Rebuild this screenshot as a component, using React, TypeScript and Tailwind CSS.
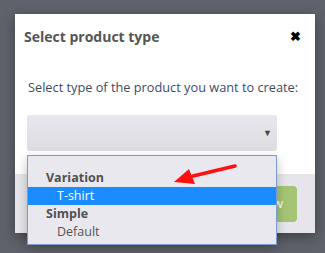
const options = [
  { label: 'Variation', group: true },
  { label: 'T-shirt', selected: true },
  { label: 'Simple', group: true },
  { label: 'Default' },
];

export default function App() {
  return (
    <div
      className="w-[325px] h-[253px] bg-[#5f626a] pt-[14px] pl-[15px] overflow-hidden"
      style={{ fontFamily: '"Open Sans", sans-serif' }}
    >
      <div className="w-[300px] h-[219px] bg-white flex flex-col shadow-[0_4px_12px_rgba(0,0,0,0.35)]">
        <div className="flex items-center justify-between h-[42px] pl-[9px] pr-[14px] pt-[2px]">
          <h3 className="text-[14px] font-bold text-[#555555]">Select product type</h3>
          <span className="text-[13px] font-bold text-black leading-none">✖</span>
        </div>

        <div className="relative flex-1 px-[12px] pt-[21px]">
          <p className="text-[12.75px] text-[#3e4a66] leading-[20px] whitespace-nowrap pl-[1px]">
            Select type of the product you want to create:
          </p>
          <div className="mt-[18px] w-[250px] h-[36px] rounded-[3px] bg-gradient-to-b from-[#e8e7ed] to-[#dddce2] flex items-center justify-end pr-[5px]">
            <span className="text-[9px] text-[#444]">▼</span>
          </div>

          <div className="absolute left-[12px] top-[99px] w-[250px] h-[90px] z-10 bg-[#e9e8ee] border border-[#7c9bd0] pt-[13px] shadow-[0_4px_10px_rgba(0,0,0,0.25)]">
            {options.map((o) => (
              <div
                key={o.label}
                className={`h-[18px] flex items-center text-[12.5px] leading-none ${
                  o.group ? 'pl-[18px] font-bold text-[#505050]' : 'pl-[29px]'
                } ${o.selected ? 'bg-[#1a8cff] text-white' : o.group ? '' : 'text-[#555555]'}`}
              >
                {o.label}
              </div>
            ))}
          </div>

          <svg className="absolute left-[158px] top-[108px] z-20" width="64" height="24" viewBox="0 0 64 24">
            <line x1="62" y1="2" x2="20" y2="12" stroke="#ff1010" strokeWidth="3.5" strokeLinecap="round" />
            <polygon points="1,18 16,5 22,20" fill="#ff1010" />
          </svg>
        </div>

        <div className="h-[59px] bg-[#e6e5eb] flex items-center justify-end pr-[18px]">
          <button className="h-[36px] px-[14px] rounded-[4px] bg-[#a5c574] text-white text-[13px]">
            Create new
          </button>
        </div>
      </div>
    </div>
  );
}
